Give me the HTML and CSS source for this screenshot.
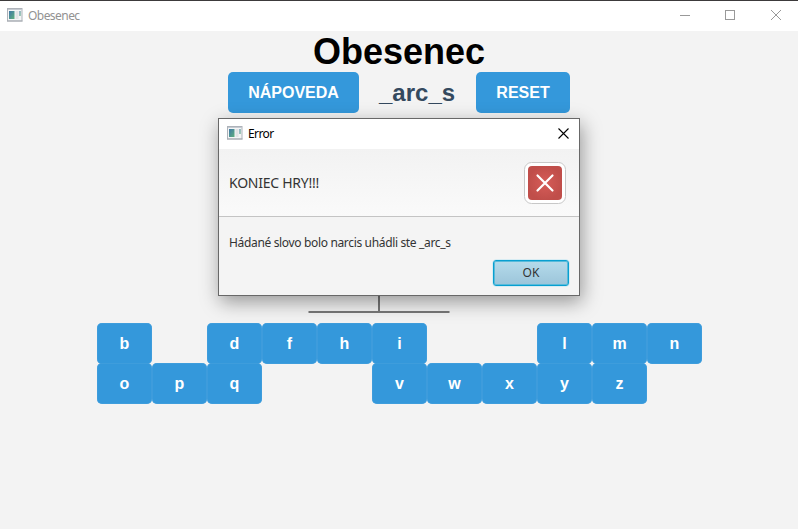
FILE: index.html
```html
<!DOCTYPE html>
<html lang="sk">
<head>
<meta charset="utf-8">
<title>Obesenec</title>
<link rel="stylesheet" href="styles.css">
</head>
<body>
<svg class="defs" width="0" height="0">
  <defs>
    <linearGradient id="pane" x1="0" y1="0" x2="1" y2="1"><stop offset="0" stop-color="#3f77a8"/><stop offset="1" stop-color="#5fb07c"/></linearGradient>
    <symbol id="app" viewBox="0 0 16 14">
      <rect x="0.5" y="0.5" width="14.5" height="12.5" fill="#f4f5f6" stroke="#adb2b9"/>
      <path d="M1 1.5h14" stroke="#c5cad1"/>
      <rect x="2" y="3" width="5.5" height="8" fill="url(#pane)"/>
      <rect x="8.5" y="3" width="3" height="8" fill="#e2e3e5"/>
      <rect x="12" y="3" width="2" height="5" fill="url(#pane)" opacity=".55"/>
      <path d="M0 13h15.5" stroke="#a7abb1"/>
    </symbol>
  </defs>
</svg>
<div class="window">
  <header class="titlebar">
    <svg class="app-icon" width="16" height="14"><use href="#app"/></svg>
    <span class="window-title">Obesenec</span>
    <svg class="controls" width="103" height="12" fill="none" stroke="#999">
      <path d="M0 6.5h10"/><rect x="45.5" y="1.5" width="9" height="9"/><path d="M91 1l10 10M101 1L91 11"/>
    </svg>
  </header>
  <main class="game">
    <h1>Obesenec</h1>
    <div class="top-row">
      <button class="btn hint">NÁPOVEDA</button>
      <span class="word">_arc_s</span>
      <button class="btn reset">RESET</button>
    </div>
    <svg class="gallows" width="142" height="210" fill="none" stroke="#777" stroke-width="2">
      <path d="M71 10V199M0.5 199H141.5"/>
    </svg>
    <div class="keys">
      <button class="btn">b</button><i></i><button class="btn">d</button><button class="btn">f</button><button class="btn">h</button><button class="btn">i</button><i></i><i></i><button class="btn">l</button><button class="btn">m</button><button class="btn">n</button>
      <button class="btn">o</button><button class="btn">p</button><button class="btn">q</button><i></i><i></i><button class="btn">v</button><button class="btn">w</button><button class="btn">x</button><button class="btn">y</button><button class="btn">z</button>
    </div>
  </main>
</div>
<section class="dialog" role="dialog">
  <header class="dialog-bar">
    <svg class="app-icon" width="16" height="14"><use href="#app"/></svg>
    <span class="dialog-title">Error</span>
    <svg class="close" width="11" height="11" stroke="#000" stroke-width="1.1"><path d="M.5 .5l10 10M10.5 .5l-10 10"/></svg>
  </header>
  <div class="dialog-head">
    <span class="headline">KONIEC HRY!!!</span>
    <svg class="error" width="42" height="42">
      <defs><radialGradient id="red"><stop offset="0" stop-color="#d65c58"/><stop offset="1" stop-color="#c04e4a"/></radialGradient></defs>
      <rect x=".5" y=".5" width="41" height="41" rx="7" fill="#fff" stroke="#c8c8c8"/>
      <rect x="4" y="4" width="34" height="34" rx="4" fill="url(#red)"/>
      <path d="M13.5 13.5l15 15M28.5 13.5l-15 15" stroke="#fff" stroke-width="2.2" stroke-linecap="round"/>
    </svg>
  </div>
  <div class="dialog-body">
    <p class="message">Hádané slovo bolo narcis uhádli ste _arc_s</p>
    <button class="ok">OK</button>
  </div>
</section>
</body>
</html>
```
FILE: styles.css
```css
* { box-sizing: border-box; }
body { margin: 0; width: 798px; height: 529px; overflow: hidden; background: #f3f3f3; font-family: "Noto Sans", sans-serif; }
button { border: 0; padding: 0; }
.defs { position: absolute; }
.window { height: 529px; border-top: 1px solid #3c3a3b; }
.titlebar { height: 30px; display: flex; align-items: center; padding: 0 15px 2px 7px; background: #fff; }
.window-title { margin-left: 5px; padding-top: 2px; font-size: 12px; line-height: 16px; letter-spacing: -0.55px; color: #929292; }
.controls { margin-left: auto; }
.game { display: flex; flex-direction: column; align-items: center; font-family: "Liberation Sans", sans-serif; }
h1 { margin: 0; height: 41px; font-size: 36px; line-height: 41px; font-weight: 700; color: #000; }
.top-row { display: flex; align-items: center; gap: 20px; }
.btn { height: 41px; border-radius: 5px; background: #3498db; color: #fff; font: 700 16px/41px "Liberation Sans", sans-serif; }
.hint { width: 131px; }
.reset { width: 94px; }
.word { width: 77px; font-size: 24px; font-weight: 700; color: #34495e; }
.gallows { display: block; margin-right: 40px; }
.keys { display: grid; grid-template-columns: repeat(11, 55px); grid-auto-rows: 40px; }
.keys .btn { padding-left: 1px; box-shadow: inset 0 0 0 .5px #48a1dd; }
.dialog { position: absolute; left: 218px; top: 118px; width: 362px; height: 178px; border: 1px solid #686868; background: #f4f4f4; box-shadow: 2px 6px 18px rgba(0, 0, 0, .38); }
.dialog-bar { display: flex; align-items: center; height: 30px; padding: 0 10px 2px 8px; background: #fff; }
.dialog-title { margin-left: 5px; padding-top: 2px; font-size: 12px; line-height: 16px; letter-spacing: -0.6px; color: #000; }
.close { margin-left: auto; }
.dialog-head { display: flex; align-items: center; justify-content: space-between; height: 68px; padding: 0 13px 0 10px; background: linear-gradient(#f2f2f2, #fafafa); border-bottom: 1px solid #c4c4c4; }
.headline { font-size: 14px; letter-spacing: -0.25px; color: #333; }
.dialog-body { display: flex; flex-direction: column; padding: 17px 9px 0 10px; }
.message { margin: 0; font-size: 12px; line-height: 16px; letter-spacing: -0.34px; color: #333; white-space: nowrap; }
.ok { align-self: flex-end; width: 76px; height: 26px; margin: 10px 1px 0 0; border: 1px solid #089fd0; border-radius: 3px; background: linear-gradient(#b5dbeb, #9cc5da); background-clip: padding-box; box-shadow: 0 0 0 .5px #b9e3f1, inset 0 0 0 1px #58bbdb; font: 12px/22px "Noto Sans", sans-serif; color: #333; }
.dialog-body { padding-top: 18px; }
.ok { margin-top: 9px; }
```
